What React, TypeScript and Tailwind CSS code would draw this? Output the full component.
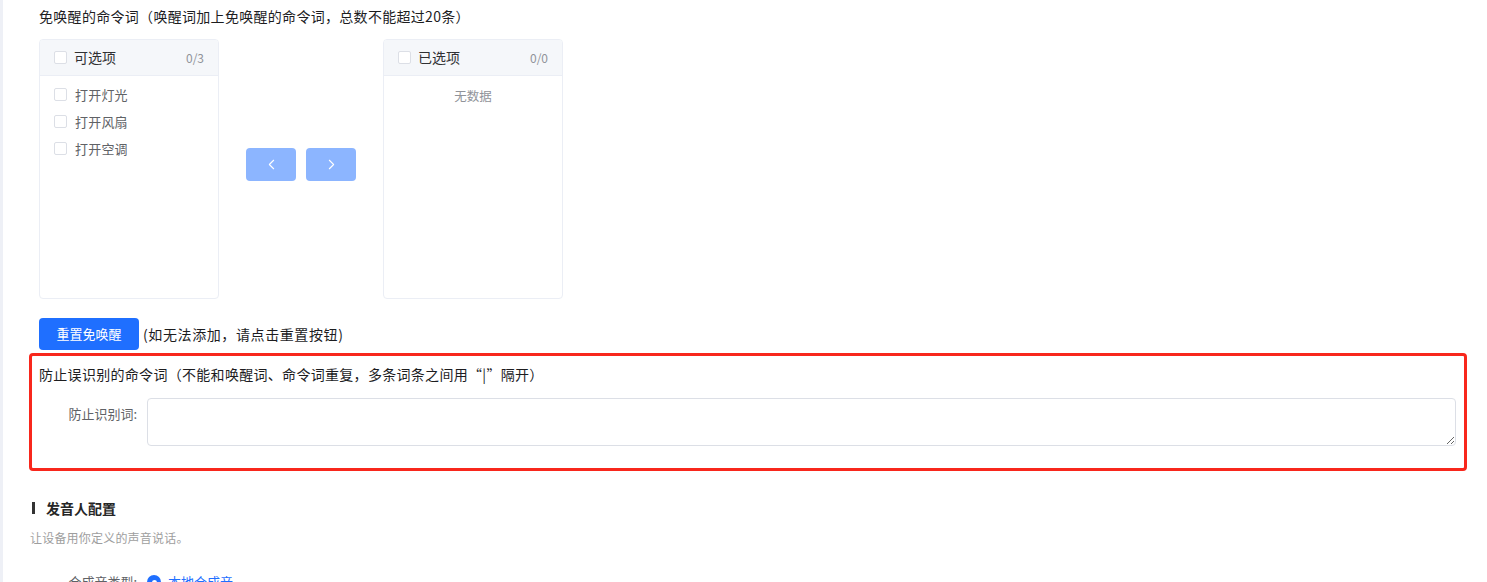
import { ChevronLeft, ChevronRight } from "lucide-react";

const FONT = { fontFamily: '"Noto Sans CJK SC", "Liberation Sans", sans-serif' };

function Box({ checked = false }: { checked?: boolean }) {
	return (
		<span
			className={
				"inline-block w-[13px] h-[13px] shrink-0 rounded-[2px] border bg-white " +
				(checked ? "border-[#1f6fff]" : "border-[#dcdfe6]")
			}
		/>
	);
}

function Panel({ title, count, items }: { title: string; count: string; items: string[] }) {
	return (
		<div className="w-[180px] h-[260px] shrink-0 border border-[#ebeef5] rounded-[4px] overflow-hidden bg-white">
			<div className="h-[36px] flex items-center pl-[14px] pr-[14px] bg-[#f5f7fa] border-b border-[#ebeef5]">
				<Box />
				<span className="ml-[7px] text-[14px] text-[#303133]">{title}</span>
				<span className="ml-auto text-[12px] text-[#909399]">{count}</span>
			</div>
			<div className="pt-[5px]">
				{items.length === 0 ? (
					<div className="mt-[2px] h-[27px] flex items-center justify-center text-[12.5px] text-[#909399]">无数据</div>
				) : (
					items.map((it) => (
						<div key={it} className="h-[27px] flex items-center pl-[14px]">
							<Box />
							<span className="ml-[8px] text-[13px] tracking-[0.2px] text-[#606266]">{it}</span>
						</div>
					))
				)}
			</div>
		</div>
	);
}

export default function App() {
	return (
		<div className="flex h-[582px] overflow-hidden bg-white" style={FONT}>
			<div className="w-[3px] shrink-0 bg-[#eef0f6]" />
			<div className="flex-1 pl-[26px] pr-[20px] pt-[5px]">
				<div className="ml-[10px] text-[14px] leading-[22px] tracking-[0.3px] text-[#1d1d1f]">
					免唤醒的命令词（唤醒词加上免唤醒的命令词，总数不能超过20条）
				</div>

				<div className="ml-[10px] mt-[12px] flex">
					<Panel title="可选项" count="0/3" items={["打开灯光", "打开风扇", "打开空调"]} />
					<div className="flex gap-[10px] px-[27px] mt-[109px] self-start">
						<button className="w-[50px] h-[33px] rounded-[4px] bg-[#8cb5ff] flex items-center justify-center text-white">
							<ChevronLeft size={17} strokeWidth={1.5} />
						</button>
						<button className="w-[50px] h-[33px] rounded-[4px] bg-[#8cb5ff] flex items-center justify-center text-white">
							<ChevronRight size={17} strokeWidth={1.5} />
						</button>
					</div>
					<Panel title="已选项" count="0/0" items={[]} />
				</div>

				<div className="ml-[10px] mt-[19px] flex items-center">
					<button className="w-[100px] h-[32px] rounded-[4px] bg-[#1f6fff] text-white text-[13px]">重置免唤醒</button>
					<span className="ml-[4px] text-[14px] tracking-[0.6px] text-[#1d1d1f]">(如无法添加，请点击重置按钮)</span>
				</div>

				<div className="mt-[3px] border-[3px] border-[#f8271c] rounded-[4px] pl-[7px] pr-[8px] pt-[7px] pb-[22px]">
					<div className="text-[14px] leading-[22px] tracking-[0.3px] text-[#1d1d1f]">
						防止误识别的命令词（不能和唤醒词、命令词重复，多条词条之间用“|”隔开）
					</div>
					<div className="mt-[13px] flex items-start">
						<label className="w-[108px] shrink-0 pr-[10px] text-right text-[13px] leading-[32px] text-[#606266]">
							防止识别词:
						</label>
						<textarea className="flex-1 h-[48px] border border-[#dcdfe6] rounded-[4px] px-[10px] py-[5px] text-[13px] outline-none" />
					</div>
				</div>

				<div className="mt-[26px] flex items-center h-[22px] pl-[3px]">
					<span className="w-[3px] h-[12px] bg-[#333]" />
					<span className="ml-[11px] text-[14px] font-bold text-[#262626]">发音人配置</span>
				</div>
				<div className="mt-[9px] pl-[1px] text-[12px] leading-[20px] tracking-[0.2px] text-[#9e9e9e]">让设备用你定义的声音说话。</div>

				<div className="mt-[18px] ml-[10px] flex items-center h-[32px]">
					<span className="w-[108px] shrink-0 pr-[10px] text-right text-[13px] text-[#606266]">合成音类型:</span>
					<span className="w-[14px] h-[14px] rounded-full bg-[#1f6fff] flex items-center justify-center">
						<span className="w-[5px] h-[5px] rounded-full bg-white" />
					</span>
					<span className="ml-[7px] text-[13px] text-[#1f6fff]">本地合成音</span>
				</div>
			</div>
		</div>
	);
}
